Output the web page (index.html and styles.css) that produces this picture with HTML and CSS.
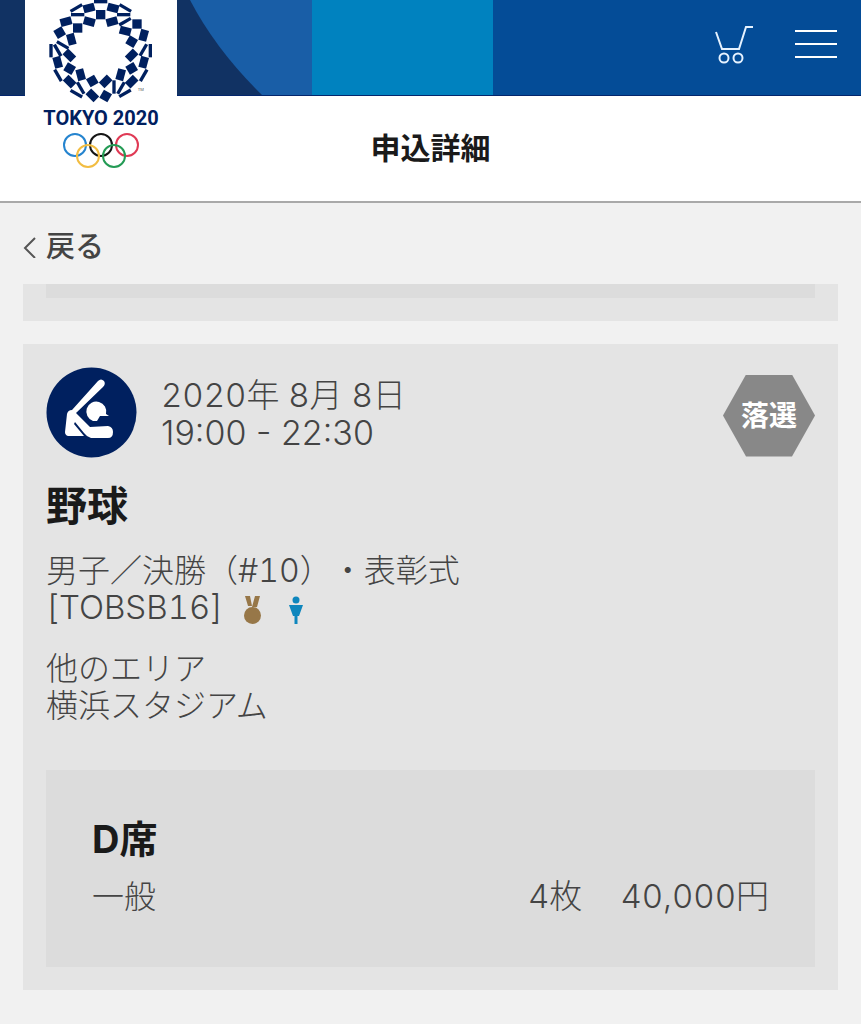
FILE: index.html
```
<!DOCTYPE html>
<html lang="ja">
<head>
    <meta charset="UTF-8">
    <meta name="viewport" content="width=device-width, initial-scale=1.0">
    <title>申込詳細</title>
    <link rel="stylesheet" href="styles.css">
</head>
<body>
    <header class="site-header">
        <svg class="header-art" viewBox="0 0 493 95" aria-hidden="true">
            <rect width="312" height="95" fill="#113263"/>
            <path d="M190 0Q216 50 262 95H312V0Z" fill="#195ea7"/>
            <rect x="312" width="181" height="95" fill="#0082bf"/>
        </svg>

        <a href="#" class="logo" aria-label="TOKYO 2020">
            <svg class="emblem" viewBox="146 0 315 309" aria-hidden="true">
                <defs>
                    <rect id="sq" x="-14" y="-14" width="28" height="28"/>
                    <rect id="re" x="-17" y="-12" width="34" height="24"/>
                    <rect id="th" x="-20" y="-5" width="40" height="10"/>
                </defs>
                <g fill="#00205f">
                    <!-- squares -->
                    <use href="#sq" transform="translate(301 44)"/>
                    <use href="#sq" transform="translate(232 84)"/>
                    <use href="#sq" transform="translate(410 72)"/>
                    <use href="#sq" transform="translate(178 98) rotate(-30)"/>
                    <use href="#sq" transform="translate(394 125) rotate(30)"/>
                    <use href="#sq" transform="translate(208 206) rotate(30)"/>
                    <use href="#sq" transform="translate(276 243) rotate(-30)"/>
                    <use href="#sq" transform="translate(316 288) rotate(30)"/>
                    <use href="#sq" transform="translate(394 205) rotate(-30)"/>
                    <!-- rectangles -->
                    <use href="#re" transform="translate(266 24) rotate(-15)"/>
                    <use href="#re" transform="translate(338 24) rotate(15)"/>
                    <use href="#re" transform="translate(197 65) rotate(-15)"/>
                    <use href="#re" transform="translate(267 65) rotate(15)"/>
                    <use href="#re" transform="translate(335 65) rotate(-15)"/>
                    <use href="#re" transform="translate(375 93) rotate(15)"/>
                    <use href="#re" transform="translate(213 118) rotate(75)"/>
                    <use href="#re" transform="translate(430 106) rotate(-75)"/>
                    <use href="#re" transform="translate(207 166) rotate(45)"/>
                    <use href="#re" transform="translate(394 166) rotate(-45)"/>
                    <use href="#re" transform="translate(172 187) rotate(75)"/>
                    <use href="#re" transform="translate(430 187) rotate(-75)"/>
                    <use href="#re" transform="translate(241 224) rotate(75)"/>
                    <use href="#re" transform="translate(361 224) rotate(-75)"/>
                    <use href="#re" transform="translate(208 245) rotate(45)"/>
                    <use href="#re" transform="translate(394 245) rotate(-45)"/>
                    <use href="#re" transform="translate(316 244) rotate(-45)"/>
                    <use href="#re" transform="translate(276 286) rotate(45)"/>
                    <!-- thin bars -->
                    <use href="#th" transform="translate(301 5)"/>
                    <use href="#th" transform="translate(228 24) rotate(-30)"/>
                    <use href="#th" transform="translate(375 24) rotate(30)"/>
                    <use href="#th" transform="translate(232 44)"/>
                    <use href="#th" transform="translate(370 44)"/>
                    <use href="#th" transform="translate(374 65) rotate(-30)"/>
                    <use href="#th" transform="translate(152 152) rotate(90)"/>
                    <use href="#th" transform="translate(172 151) rotate(60)"/>
                    <use href="#th" transform="translate(187 135) rotate(30)"/>
                    <use href="#th" transform="translate(429 150) rotate(-60)"/>
                    <use href="#th" transform="translate(450 152) rotate(90)"/>
                    <use href="#th" transform="translate(173 226) rotate(60)"/>
                    <use href="#th" transform="translate(430 226) rotate(-60)"/>
                    <use href="#th" transform="translate(241 264) rotate(60)"/>
                    <use href="#th" transform="translate(228 281) rotate(30)"/>
                    <use href="#th" transform="translate(341 261) rotate(90)"/>
                    <use href="#th" transform="translate(362 264) rotate(-60)"/>
                    <use href="#th" transform="translate(374 280) rotate(-30)"/>
                </g>
                <text class="tm" x="412" y="273">TM</text>
            </svg>
            <span class="logo-text">TOKYO 2020</span>
            <svg class="rings" viewBox="0 0 76 36" fill="none" stroke-width="2" aria-hidden="true">
                <circle cx="12" cy="12" r="11" stroke="#2584cf"/>
                <circle cx="38" cy="12" r="11" stroke="#151515"/>
                <circle cx="64" cy="12" r="11" stroke="#e03a55"/>
                <circle cx="25" cy="23" r="11" stroke="#f2bd42"/>
                <circle cx="51" cy="23" r="11" stroke="#249b55"/>
            </svg>
        </a>

        <nav class="header-nav">
            <button type="button" class="icon-button" aria-label="カート">
                <svg width="38" height="40" viewBox="0 0 38 40" fill="none" stroke="#e6f2ff" stroke-width="2">
                    <path d="M1 8L7 25H24L31 3H38"/>
                    <circle cx="9" cy="34" r="4.5"/>
                    <circle cx="23" cy="34" r="4.5"/>
                </svg>
            </button>
            <button type="button" class="icon-button" aria-label="メニュー">
                <svg width="42" height="40" viewBox="0 0 42 40" stroke="#fff" stroke-width="2">
                    <path d="M0 7H42M0 20H42M0 33H42"/>
                </svg>
            </button>
        </nav>
    </header>

    <div class="title-bar">
        <h1>申込詳細</h1>
    </div>

    <main class="content">
        <a href="#" class="back-link">
            <svg width="13" height="22" viewBox="0 0 13 22" fill="none" stroke="#555" stroke-width="2">
                <path d="M12 2L2 12L12 22"/>
            </svg>
            戻る
        </a>

        <div class="card card-previous">
            <div class="seat-box seat-box-end"></div>
        </div>

        <article class="card">
            <div class="card-head">
                <svg class="sport-icon" viewBox="0 0 91 91" aria-hidden="true">
                    <circle cx="45.5" cy="45.5" r="45" fill="#00205f"/>
                    <path d="M52 14Q55 11 58 14Q60 17 57 20L30 46L44 60L62 59Q67 60 67 65Q67 71 62 71H45Q41 70 38 66L29 55L28 57L38 69H22Q19 68 19 65L21 47Q22 43 26 43Z" fill="#fff"/>
                    <path d="M63 49L60 47A10 10 0 1 0 47 54L51 54L54 49Z" fill="#fff"/>
                </svg>
                <p class="date">2020年 8月 8日<br><span class="time">19:00 - 22:30</span></p>
                <span class="status">落選</span>
            </div>

            <h2>野球</h2>
            <p class="event">
                男子／決勝（#10）・表彰式<br>
                <span class="code">[TOBSB16]</span>
                <svg class="mark medal" width="17" height="28" viewBox="0 0 17 28" fill="#977748" role="img" aria-label="メダル">
                    <path d="M1 0H6L8 10H4ZM11 0H16L13 11H8Z"/>
                    <circle cx="8.5" cy="19.5" r="8.5"/>
                </svg>
                <svg class="mark" width="14" height="28" viewBox="0 0 14 28" fill="#0e86bd" role="img" aria-label="男子">
                    <circle cx="7" cy="4" r="3.5"/>
                    <path d="M0 9H14L10 20H8.5V28H5.5V20H4Z"/>
                </svg>
            </p>
            <p class="venue">他のエリア<br>横浜スタジアム</p>

            <section class="seat-box">
                <h3>D席</h3>
                <div class="seat-row">
                    <span class="seat-type">一般</span>
                    <span class="amount">4枚</span>
                    <span class="amount">40,000円</span>
                </div>
            </section>
        </article>
    </main>
</body>
</html>
```
FILE: styles.css
```
* {
    box-sizing: border-box;
}

body {
    margin: 0;
    background-color: #f1f1f1;
    color: #444;
    font-family: Inter, "Noto Sans CJK JP", sans-serif;
    font-size: 32px;
    font-weight: 300;
    font-variant-numeric: tabular-nums;
    line-height: 37px;
    text-spacing-trim: space-all;
}

h1, h2, h3, p {
    margin: 0;
}

h1, h2, h3 {
    color: #1a1a1a;
    font-weight: bold;
}

a {
    color: inherit;
    text-decoration: none;
}

/* Header */
.site-header {
    position: relative;
    display: flex;
    align-items: flex-start;
    justify-content: space-between;
    height: 96px;
    padding: 0 24px 0 25px;
    background-color: #044c97;
    border-bottom: 1px solid #04266d;
}

.header-art {
    position: absolute;
    top: 0;
    left: 0;
    height: 95px;
}

.logo {
    position: relative;
    display: flex;
    flex-direction: column;
    align-items: center;
    width: 152px;
    padding-bottom: 8px;
    background-color: #fff;
}

.emblem {
    width: 105px;
    height: 103px;
}

.tm {
    font-size: 12px;
    font-weight: normal;
    fill: #555;
}

.logo-text {
    color: #00205f;
    font-family: Roboto, sans-serif;
    font-size: 20px;
    font-weight: bold;
    line-height: 30px;
    white-space: nowrap;
}

.rings {
    width: 76px;
    height: 36px;
}

.header-nav {
    display: flex;
    gap: 42px;
    padding-top: 24px;
}

.icon-button {
    padding: 0;
    border: none;
    background: none;
    cursor: pointer;
}

.icon-button svg {
    display: block;
}

.title-bar {
    padding: 34px 0;
    background-color: #fff;
    border-bottom: 2px solid #a9a9a9;
}

.title-bar h1 {
    font-size: 30px;
    text-align: center;
}

/* Content */
.content {
    padding: 25px 23px 23px;
}

.back-link {
    display: flex;
    align-items: center;
    gap: 10px;
    margin-bottom: 19px;
    font-size: 29px;
    font-weight: 500;
}

.card {
    padding: 23px;
    background-color: #e4e4e4;
}

.card-previous {
    margin-bottom: 23px;
    padding-top: 0;
}

.card-head {
    display: flex;
    align-items: center;
    margin-bottom: 26px;
}

.sport-icon {
    width: 91px;
    height: 91px;
}

.date {
    flex: 1;
    padding: 4px 0 0 24px;
    font-size: 33px;
}

.time {
    font-size: 34px;
    font-variant-numeric: normal;
}

.status {
    width: 92px;
    margin-top: 6px;
    background-color: #888;
    color: #fff;
    font-size: 28px;
    font-weight: bold;
    line-height: 82px;
    text-align: center;
    clip-path: polygon(25% 0, 75% 0, 100% 50%, 75% 100%, 25% 100%, 0 50%);
}

h2 {
    margin-bottom: 24px;
    font-size: 41px;
    line-height: 44px;
}

.event {
    margin-bottom: 24px;
}

.code,
.amount {
    font-size: 33px;
}

.mark {
    vertical-align: middle;
}

.medal {
    margin: 0 20px 0 12px;
}

.venue {
    margin-bottom: 46px;
}

.seat-box {
    padding: 47px 46px 52px;
    background-color: #dcdcdc;
}

.seat-box-end {
    padding: 7px;
}

h3 {
    margin-bottom: 17px;
    font-size: 38px;
    line-height: 44px;
}

.seat-row {
    display: flex;
    gap: 38px;
}

.seat-type {
    flex: 1;
}
```
